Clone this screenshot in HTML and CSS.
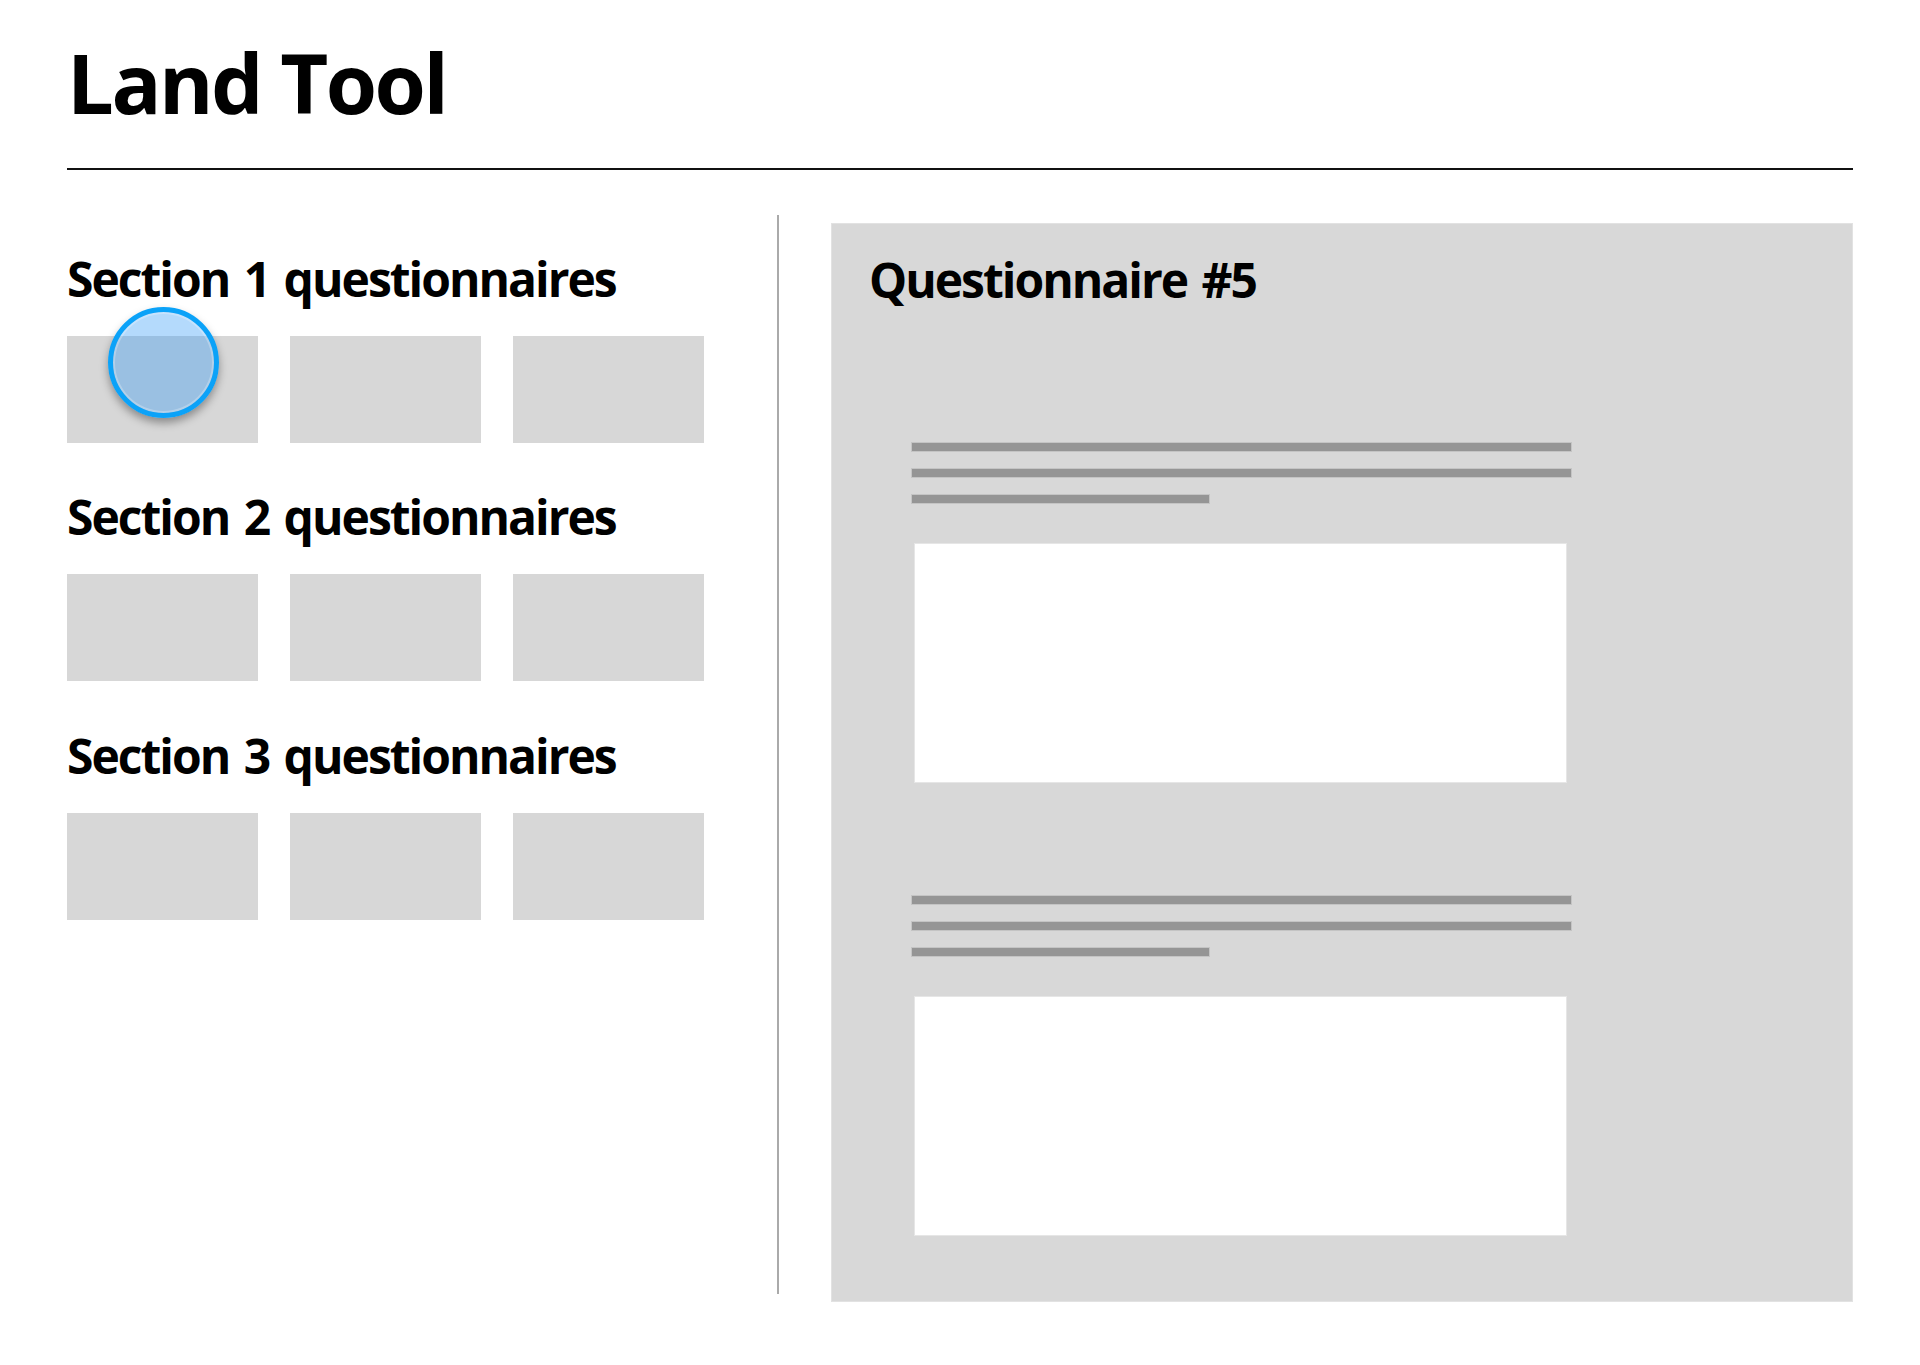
FILE: index.html
```html
<!DOCTYPE html>
<html lang="en">
<head>
    <meta charset="UTF-8">
    <meta name="viewport" content="width=device-width, initial-scale=1.0">
    <title>Land Tool</title>
    <link rel="stylesheet" href="styles.css">
</head>
<body>
    <div class="page">
        <h1 class="title">Land Tool</h1>
        <div class="rule"></div>

        <div class="main">
            <div class="sections">
                <div class="section">
                    <h2 class="heading">Section 1 questionnaires</h2>
                    <div class="thumbs">
                        <div class="thumb">
                            <div class="touch"></div>
                        </div>
                        <div class="thumb"></div>
                        <div class="thumb"></div>
                    </div>
                </div>
                <div class="section">
                    <h2 class="heading">Section 2 questionnaires</h2>
                    <div class="thumbs">
                        <div class="thumb"></div>
                        <div class="thumb"></div>
                        <div class="thumb"></div>
                    </div>
                </div>
                <div class="section">
                    <h2 class="heading">Section 3 questionnaires</h2>
                    <div class="thumbs">
                        <div class="thumb"></div>
                        <div class="thumb"></div>
                        <div class="thumb"></div>
                    </div>
                </div>
            </div>

            <div class="divider"></div>

            <div class="panel">
                <h2 class="heading">Questionnaire #5</h2>

                <div class="question first">
                    <div class="text-line"></div>
                    <div class="text-line"></div>
                    <div class="text-line short"></div>
                    <div class="answer"></div>
                </div>

                <div class="question">
                    <div class="text-line"></div>
                    <div class="text-line"></div>
                    <div class="text-line short"></div>
                    <div class="answer"></div>
                </div>
            </div>
        </div>
    </div>
</body>
</html>
```

FILE: styles.css
```css
body {
    margin: 0;
    background: #ffffff;
    color: #000000;
    font-family: 'Open Sans', 'Noto Sans', sans-serif;
}

.page {
    padding: 0 67px;
}

.title {
    margin: 32px 0 0 0;
    font-size: 83px;
    line-height: 100px;
    font-weight: 700;
    letter-spacing: -2.5px;
}

.rule {
    margin-top: 36px;
    height: 2px;
    background: #111111;
}

.main {
    display: flex;
    align-items: flex-start;
    margin-top: 45px;
}

.sections {
    width: 710px;
}

.section {
    margin-bottom: 44px;
}

.section:nth-child(2) {
    margin-bottom: 45px;
}

.heading {
    margin: 34px 0 0 0;
    font-size: 48px;
    line-height: 60px;
    font-weight: 700;
    letter-spacing: -2px;
    word-spacing: 4px;
}

.section + .section .heading {
    margin-top: 0;
}

.thumbs {
    display: flex;
    gap: 32px;
    margin-top: 27px;
}

.thumb {
    position: relative;
    width: 191px;
    height: 107px;
    background: #d7d7d7;
}

/* touch indicator over the first thumbnail */
.touch {
    position: absolute;
    left: 41px;
    top: -29px;
    width: 101px;
    height: 101px;
    border: 5px solid #0ba2f8;
    border-radius: 50%;
    background: rgba(40, 150, 245, 0.35);
    box-shadow: inset 0 0 0 2px rgba(255, 255, 255, 0.25), 0 5px 8px rgba(0, 0, 0, 0.35);
}

.divider {
    width: 2px;
    height: 1079px;
    background: #aaaaaa;
}

.panel {
    flex: 1;
    margin-left: 52px;
    margin-top: 8px;
    height: 1079px;
    box-sizing: border-box;
    padding: 26px 0 0 37px;
    background: #d8d8d8;
    border: 1px solid #e2e2e2;
}

.panel .heading {
    margin-top: 0;
}

.question {
    width: 659px;
    margin-left: 43px;
    margin-top: 114px;
}

.question.first {
    margin-top: 133px;
}

.text-line {
    height: 8px;
    margin-bottom: 18px;
    background: #959595;
    box-shadow: 0 0 0 1px #c4c4c4;
}

.text-line.short {
    width: 297px;
    margin-bottom: 41px;
}

.answer {
    width: 651px;
    height: 238px;
    margin-left: 3px;
    background: #ffffff;
    box-shadow: 0 0 0 1px #e6e6e6;
}
```
